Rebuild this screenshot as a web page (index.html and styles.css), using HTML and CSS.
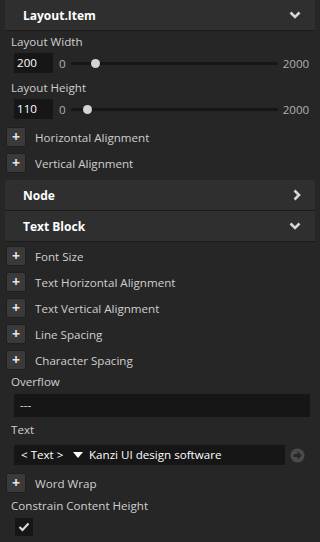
FILE: index.html
```html
<!DOCTYPE html>
<html lang="en">
<head>
    <meta charset="UTF-8">
    <title>Properties</title>
    <link rel="stylesheet" href="styles.css">
</head>
<body>
    <div class="panel">
        <div class="section-header">
            <span>Layout.Item</span>
            <svg class="chevron" width="12" height="8" viewBox="0 0 12 8"><polyline points="1.5,1.5 6,6 10.5,1.5" /></svg>
        </div>

        <div class="label first">Layout Width</div>
        <div class="slider-row">
            <div class="num-input">200</div>
            <span class="min">0</span>
            <div class="track"><div class="knob" style="left: 20px"></div></div>
            <span class="max">2000</span>
        </div>
        <div class="label">Layout Height</div>
        <div class="slider-row">
            <div class="num-input">110</div>
            <span class="min">0</span>
            <div class="track"><div class="knob" style="left: 12px"></div></div>
            <span class="max">2000</span>
        </div>

        <div class="add-row gap-top"><span class="plus">+</span>Horizontal Alignment</div>
        <div class="add-row"><span class="plus">+</span>Vertical Alignment</div>

        <div class="section-header node">
            <span>Node</span>
            <svg class="chevron" width="8" height="12" viewBox="0 0 8 12"><polyline points="1.5,1.5 6,6 1.5,10.5" /></svg>
        </div>
        <div class="section-header">
            <span>Text Block</span>
            <svg class="chevron" width="12" height="8" viewBox="0 0 12 8"><polyline points="1.5,1.5 6,6 10.5,1.5" /></svg>
        </div>

        <div class="add-row first-add"><span class="plus">+</span>Font Size</div>
        <div class="add-row"><span class="plus">+</span>Text Horizontal Alignment</div>
        <div class="add-row"><span class="plus">+</span>Text Vertical Alignment</div>
        <div class="add-row"><span class="plus">+</span>Line Spacing</div>
        <div class="add-row"><span class="plus">+</span>Character Spacing</div>

        <div class="label small-gap">Overflow</div>
        <div class="wide-input">---</div>

        <div class="label text-label">Text</div>
        <div class="text-row">
            <div class="dropdown">&lt; Text &gt; <span class="tri"></span></div>
            <div class="text-input">Kanzi UI design software</div>
            <svg class="go" width="15" height="15" viewBox="0 0 16 16">
                <circle cx="8" cy="8" r="7.5" fill="#4a4a4a" />
                <path d="M4 6.5 H8 V3.5 L12.5 8 L8 12.5 V9.5 H4 Z" fill="#262626" />
            </svg>
        </div>

        <div class="add-row wrap-row"><span class="plus">+</span>Word Wrap</div>
        <div class="label constrain">Constrain Content Height</div>
        <div class="checkbox">
            <svg width="12" height="10" viewBox="0 0 12 10"><polyline points="1.5,5 4.5,8 10.5,1.5" /></svg>
        </div>
    </div>
</body>
</html>
```
FILE: styles.css
```css
body {
    margin: 0;
    background-color: #262626;
    font-family: "Open Sans", "Noto Sans", sans-serif;
    font-size: 11.6px;
    color: #cfcfcf;
    width: 320px;
    height: 542px;
    overflow: hidden;
}
.panel {
    display: flex;
    flex-direction: column;
}
.section-header {
    height: 30px;
    margin: 0 5px;
    background-color: #2f2f2f;
    border-bottom: 1px solid #1b1b1b;
    display: flex;
    align-items: center;
    justify-content: space-between;
    padding: 0 14px 0 18px;
    font-weight: bold;
    font-size: 12px;
    color: #ffffff;
}
.section-header.node {
    margin-top: 7px;
}
.chevron polyline {
    fill: none;
    stroke: #d6d6d6;
    stroke-width: 2.6;
}
.label {
    height: 16px;
    line-height: 16px;
    padding-left: 11px;
    margin-top: 7px;
}
.label.first {
    margin-top: 3px;
}
.label.small-gap {
    margin-top: 4px;
}
.label.text-label {
    margin-top: 5px;
}
.label.constrain {
    margin-top: 5px;
}
.slider-row {
    display: flex;
    align-items: center;
    height: 20px;
    margin-top: 3px;
    padding-left: 14px;
}
.num-input {
    width: 36px;
    height: 20px;
    line-height: 20px;
    background-color: #161616;
    color: #ffffff;
    padding-left: 3px;
}
.min {
    margin-left: 6px;
    color: #b0b0b0;
}
.track {
    position: relative;
    width: 207px;
    height: 3px;
    margin-left: 5px;
    background-color: #161616;
    border-radius: 2px;
}
.knob {
    position: absolute;
    top: -3px;
    width: 9px;
    height: 9px;
    border-radius: 50%;
    background-color: #d4d4d4;
}
.max {
    margin-left: 5px;
    color: #b0b0b0;
}
.add-row {
    display: flex;
    align-items: center;
    height: 20px;
    margin-top: 6px;
    padding-left: 6px;
}
.add-row.gap-top {
    margin-top: 8px;
}
.add-row.first-add {
    margin-top: 4px;
}
.add-row.wrap-row {
    margin-top: 8px;
}
.plus {
    width: 18px;
    height: 18px;
    border: 1px solid #1f1f1f;
    border-radius: 2px;
    background-color: #3a3a3a;
    color: #e6e6e6;
    font-weight: bold;
    font-size: 14px;
    line-height: 17px;
    text-align: center;
    margin-right: 9px;
}
.wide-input {
    height: 23px;
    line-height: 22px;
    margin: 4px 10px 0 14px;
    background-color: #161616;
    color: #e0e0e0;
    padding-left: 6px;
}
.text-row {
    display: flex;
    align-items: center;
    height: 20px;
    margin-top: 7px;
    padding-left: 14px;
}
.dropdown {
    width: 72px;
    height: 20px;
    line-height: 20px;
    background-color: #161616;
    color: #ffffff;
    padding-left: 7px;
    box-sizing: border-box;
    display: flex;
    align-items: center;
}
.tri {
    width: 0;
    height: 0;
    border-left: 5px solid transparent;
    border-right: 5px solid transparent;
    border-top: 6px solid #ffffff;
    margin-left: 10px;
}
.text-input {
    width: 199px;
    height: 20px;
    line-height: 20px;
    background-color: #161616;
    color: #ffffff;
    padding-left: 3px;
    box-sizing: border-box;
}
.go {
    margin-left: 5px;
}
.checkbox {
    width: 18px;
    height: 18px;
    margin: 4px 0 0 15px;
    background-color: #161616;
    display: flex;
    align-items: center;
    justify-content: center;
}
.checkbox polyline {
    fill: none;
    stroke: #e0e0e0;
    stroke-width: 2;
}
```
